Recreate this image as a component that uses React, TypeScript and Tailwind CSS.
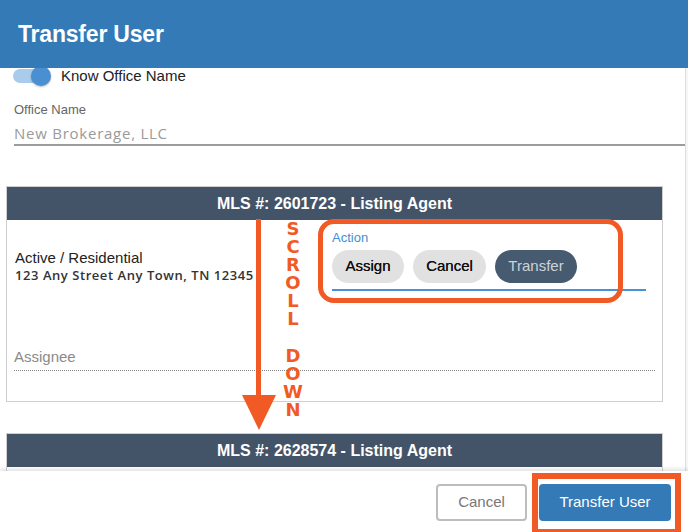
const sans = "font-['Liberation_Sans',Arial,sans-serif]";
const wide = "font-['Open_Sans','DejaVu_Sans',sans-serif]";

function MlsCard({ mls, children }: { mls: string; children?: React.ReactNode }) {
  return (
    <div className="mx-[6px] w-[657px] border border-[#cfcfcf] bg-white">
      <div className="flex h-[33px] items-center justify-center bg-[#435468] text-[16px] font-bold text-white">
        MLS #: {mls} - Listing Agent
      </div>
      {children}
    </div>
  );
}

export default function App() {
  const scroll = ["S", "C", "R", "O", "L", "L", "", "D", "O", "W", "N"];
  return (
    <div className={`relative flex h-[532px] w-[688px] flex-col overflow-hidden bg-white ${sans}`}>
      <header className="flex h-[68px] shrink-0 items-center bg-[#337ab7] px-[18px]">
        <h1 className="text-[23px] font-bold tracking-[-0.2px] text-white">Transfer User</h1>
      </header>

      <main className="flex min-h-0 flex-1">
        <div className="min-w-0 flex-1 overflow-hidden">
          <div className="-mt-[4px] flex h-[24px] items-center gap-[10px] pl-[13px]">
            <span className="relative flex h-[20px] w-[38px] items-center">
              <span className="h-[14px] w-[34px] rounded-full bg-[#a9cbec]" />
              <span className="absolute right-0 h-[20px] w-[20px] rounded-full bg-[#4a8fd1] shadow-[0_1px_2px_rgba(0,0,0,0.3)]" />
            </span>
            <span className="text-[15px] text-[#222]">Know Office Name</span>
          </div>

          <div className="mt-[14px] pl-[14px]">
            <div className="text-[13px] leading-[16px] text-[#666]">Office Name</div>
            <div className={`mt-[5px] -mr-[2px] border-b-2 border-[#9c9c9c] pb-[1px] text-[15px] leading-[20px] tracking-[0.75px] text-[#9a9a9a] ${wide}`}>
              New Brokerage, LLC
            </div>
          </div>

          <div className="mt-[40px]">
            <MlsCard mls="2601723">
              <div className="flex h-[181px] flex-col">
                <div className="flex">
                  <div className="w-[325px] pl-[8px] pt-[29px]">
                    <div className="text-[15px] leading-[18px] text-[#222]">Active / Residential</div>
                    <div className={`text-[13px] font-semibold leading-[16px] tracking-[0.55px] text-[#333] ${wide}`}>
                      123 Any Street Any Town, TN 12345
                    </div>
                  </div>
                  <div className="w-[314px] pt-[11px]">
                    <div className="text-[13px] leading-[14px] text-[#3d8fd8]">Action</div>
                    <div className="mt-[5px] flex gap-[9px]">
                      <span className="flex h-[33px] w-[72px] items-center justify-center rounded-full bg-[#e1e1e1] text-[15px] text-[#111] [text-shadow:0_0_0.4px_#111]">Assign</span>
                      <span className="flex h-[33px] w-[73px] items-center justify-center rounded-full bg-[#e1e1e1] text-[15px] text-[#111] [text-shadow:0_0_0.4px_#111]">Cancel</span>
                      <span className="flex h-[33px] w-[82px] items-center justify-center rounded-full bg-[#465a70] text-[15px] text-[#cdd3da]">Transfer</span>
                    </div>
                    <div className="mt-[6px] h-[2px] bg-[#4a90d9]" />
                  </div>
                </div>
                <div className="mx-[7px] mt-auto mb-[30px] border-b border-dotted border-[#888] pb-[4px] text-[15px] leading-[18px] text-[#8a8a8a]">
                  Assignee
                </div>
              </div>
            </MlsCard>
          </div>

          <div className="mt-[31px]">
            <MlsCard mls="2628574">
              <div className="h-[40px]" />
            </MlsCard>
          </div>
        </div>
        <div className="w-[3px] shrink-0 border-l border-[#dedede] bg-[#f6f6f6]" />
      </main>

      <footer className="relative flex h-[61px] shrink-0 items-start justify-end gap-[12px] bg-white pr-[17px] pt-[13px] shadow-[0_-2px_4px_rgba(0,0,0,0.12)]">
        <button className="flex h-[37px] w-[91px] items-center justify-center rounded-[4px] border-2 border-[#bdbdbd] bg-white text-[15px] text-[#777]">
          Cancel
        </button>
        <button className="flex h-[37px] w-[132px] items-center justify-center rounded-[4px] bg-[#337ab7] text-[15px] text-white">
          Transfer User
        </button>
      </footer>

      {/* annotations */}
      <div className="pointer-events-none absolute left-[318px] top-[219px] h-[84px] w-[305px] rounded-[16px] border-[5px] border-[#f15a24]" />
      <div className="pointer-events-none absolute left-[532px] top-[473px] h-[62px] w-[149px] border-[6px] border-[#f15a24]" />
      <svg className="pointer-events-none absolute left-[240px] top-[219px]" width="40" height="212" viewBox="0 0 40 212">
        <rect x="16" y="0" width="5" height="178" fill="#f15a24" />
        <polygon points="2,176 36,176 19,211" fill="#f15a24" />
      </svg>
      <div className="pointer-events-none absolute left-[283px] top-[220px] flex w-[20px] flex-col items-center font-['DejaVu_Sans',sans-serif] text-[18px] font-bold text-[#f15a24]">
        {scroll.map((c, i) => (
          <span key={i} className={c ? "h-[18px] leading-[18px]" : "h-[19px]"}>{c}</span>
        ))}
      </div>
    </div>
  );
}
